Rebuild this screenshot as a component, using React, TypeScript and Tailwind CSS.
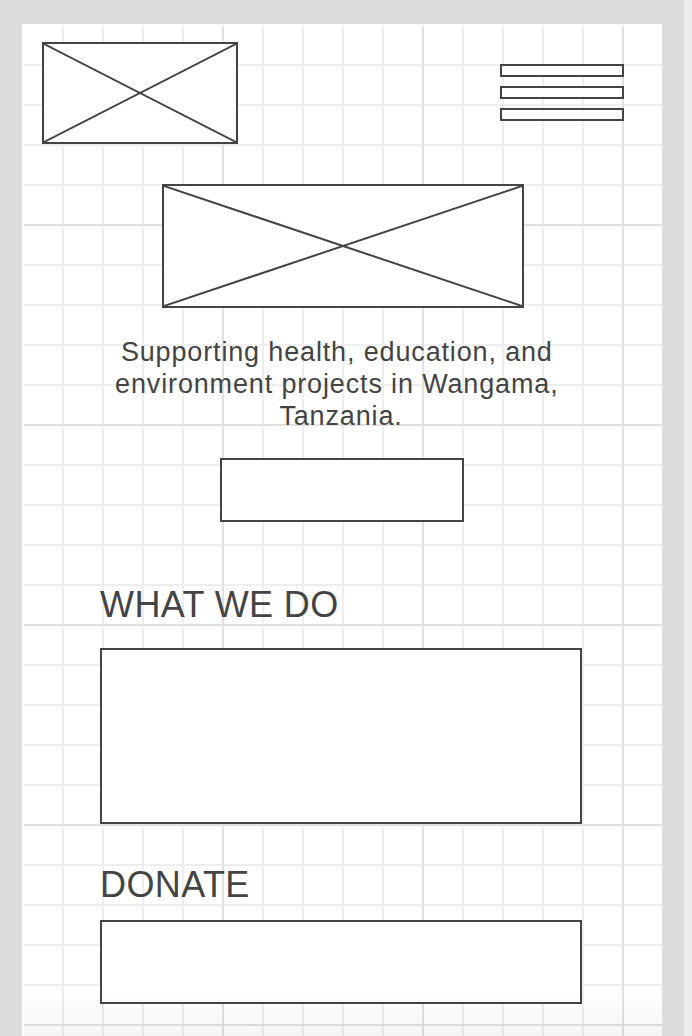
const gridBg =
  'bg-[linear-gradient(to_right,#e1e1e1_2px,transparent_2px),linear-gradient(to_bottom,#e1e1e1_2px,transparent_2px),linear-gradient(to_right,#eeeeee_2px,transparent_2px),linear-gradient(to_bottom,#eeeeee_2px,transparent_2px)] bg-[size:200px_200px,200px_200px,40px_40px,40px_40px]';

function ImageBox({ className }: { className: string }) {
  return (
    <div className={`relative border-2 border-[#444] bg-white ${className}`}>
      <svg className="absolute inset-0 h-full w-full" viewBox="0 0 100 100" preserveAspectRatio="none">
        <line x1="0" y1="0" x2="100" y2="100" stroke="#444" strokeWidth="2" vectorEffect="non-scaling-stroke" />
        <line x1="100" y1="0" x2="0" y2="100" stroke="#444" strokeWidth="2" vectorEffect="non-scaling-stroke" />
      </svg>
    </div>
  );
}

export default function App() {
  return (
    <div className="flex h-[1036px] w-[692px] overflow-hidden bg-[#dcdcdc] font-['Liberation_Sans',Arial,sans-serif] text-[#444]">
      <div className="w-[22px] shrink-0" />

      {/* Canvas */}
      <div
        className={`relative mt-[24px] w-[640px] shrink-0 border-l-2 border-t-2 border-white bg-white bg-origin-border bg-clip-padding ${gridBg}`}
      >
        <div className="flex flex-col">
          {/* Header */}
          <div className="flex items-start justify-between pl-[18px] pr-[38px] pt-[16px]">
            <ImageBox className="h-[102px] w-[196px]" />
            <div className="mt-[22px] flex flex-col gap-[9px]">
              <div className="h-[13px] w-[124px] border-2 border-[#444] bg-white" />
              <div className="h-[13px] w-[124px] border-2 border-[#444] bg-white" />
              <div className="h-[13px] w-[124px] border-2 border-[#444] bg-white" />
            </div>
          </div>

          {/* Hero */}
          <div className="ml-[138px] mt-[40px]">
            <ImageBox className="h-[124px] w-[362px]" />
          </div>

          <p className="ml-[56px] mt-[28px] w-[522px] text-center text-[27px] leading-[32px] tracking-[0.85px]">
            Supporting health, education, and{'\u00a0'}
            <br />
            environment projects in Wangama,{'\u00a0'}
            <br />
            Tanzania.
          </p>

          <div className="ml-[196px] mt-[26px] h-[64px] w-[244px] border-2 border-[#444] bg-white" />

          {/* What we do */}
          <h2 className="ml-[76px] mt-[63px] text-[36px] leading-[40px] tracking-[0.4px]">WHAT WE DO</h2>
          <div className="ml-[76px] mt-[23px] h-[176px] w-[482px] border-2 border-[#444] bg-white" />

          {/* Donate */}
          <h2 className="ml-[76px] mt-[41px] text-[36px] leading-[40px] tracking-[0.4px]">DONATE</h2>
          <div className="ml-[76px] mt-[15px] h-[84px] w-[482px] border-2 border-[#444] bg-white" />
        </div>

        <div className="pointer-events-none absolute bottom-0 left-0 right-0 h-[48px] bg-linear-to-b from-transparent to-black/[0.04]" />
      </div>

      <div className="w-[22px] shrink-0" />
      <div className="w-[8px] shrink-0 bg-[#ececec]" />
    </div>
  );
}
